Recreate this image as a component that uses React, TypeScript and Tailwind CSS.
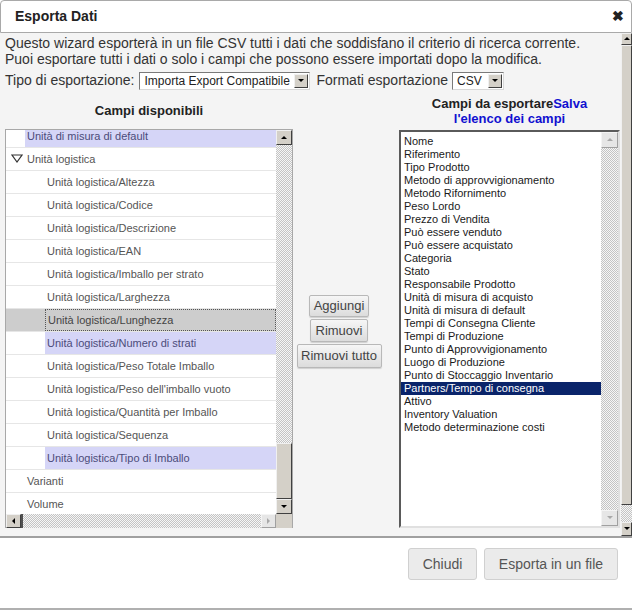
import React from "react";

type Row = { label: string; indent: number; kind?: "hl" | "sel"; toggle?: boolean };

const leftRows: Row[] = [
  { label: "Unità di misura di default", indent: 19, kind: "hl" },
  { label: "Unità logistica", indent: 19, toggle: true },
  { label: "Unità logistica/Altezza", indent: 39 },
  { label: "Unità logistica/Codice", indent: 39 },
  { label: "Unità logistica/Descrizione", indent: 39 },
  { label: "Unità logistica/EAN", indent: 39 },
  { label: "Unità logistica/Imballo per strato", indent: 39 },
  { label: "Unità logistica/Larghezza", indent: 39 },
  { label: "Unità logistica/Lunghezza", indent: 39, kind: "sel" },
  { label: "Unità logistica/Numero di strati", indent: 39, kind: "hl" },
  { label: "Unità logistica/Peso Totale Imballo", indent: 39 },
  { label: "Unità logistica/Peso dell'imballo vuoto", indent: 39 },
  { label: "Unità logistica/Quantità per Imballo", indent: 39 },
  { label: "Unità logistica/Sequenza", indent: 39 },
  { label: "Unità logistica/Tipo di Imballo", indent: 39, kind: "hl" },
  { label: "Varianti", indent: 19 },
  { label: "Volume", indent: 19 },
];

const rightItems = [
  "Nome",
  "Riferimento",
  "Tipo Prodotto",
  "Metodo di approvvigionamento",
  "Metodo Rifornimento",
  "Peso Lordo",
  "Prezzo di Vendita",
  "Può essere venduto",
  "Può essere acquistato",
  "Categoria",
  "Stato",
  "Responsabile Prodotto",
  "Unità di misura di acquisto",
  "Unità di misura di default",
  "Tempi di Consegna Cliente",
  "Tempi di Produzione",
  "Punto di Approvvigionamento",
  "Luogo di Produzione",
  "Punto di Stoccaggio Inventario",
  "Partners/Tempo di consegna",
  "Attivo",
  "Inventory Valuation",
  "Metodo determinazione costi",
];

const checker =
  "bg-[repeating-conic-gradient(#c4c4c4_0_25%,#f6f6f6_0_50%)] bg-[length:2px_2px]";

function Arrow({ dir, color = "#000" }: { dir: "up" | "down" | "left" | "right"; color?: string }) {
  const pts = {
    up: "1,5 4,2 7,5",
    down: "1,2 4,5 7,2",
    left: "5,1 2,4 5,7",
    right: "2,1 5,4 2,7",
  }[dir];
  return (
    <svg width="8" height="8" viewBox="0 0 8 8">
      <polygon points={pts} fill={color} />
    </svg>
  );
}

function ArrowBtn({ dir, w, h, faded }: { dir: "up" | "down" | "left" | "right"; w: string; h: string; faded?: boolean }) {
  return (
    <div
      className={`${w} ${h} flex shrink-0 items-center justify-center border ${
        faded
          ? "border-t-[#f4f4f4] border-l-[#f4f4f4] border-b-[#a0a0a0] border-r-[#a0a0a0] bg-[#e6e6e6]"
          : "border-t-[#f0f0f0] border-l-[#f0f0f0] border-b-[#404040] border-r-[#404040] bg-[#d4d0c8]"
      }`}
    >
      <Arrow dir={dir} color={faded ? "#a8a8a8" : "#000"} />
    </div>
  );
}

function Select({ value, w }: { value: string; w: string }) {
  return (
    <div className={`${w} h-[18px] flex items-stretch border border-t-[#7a7a7a] border-l-[#7a7a7a] border-b-[#d8d8d8] border-r-[#d8d8d8] bg-white`}>
      <span className="flex-1 overflow-hidden whitespace-nowrap pl-[4px] text-[12px] leading-[16px] text-[#222]">
        {value}
      </span>
      <div className="my-[1px] mr-[1px] w-[14px] flex items-center justify-center border border-t-[#f0f0f0] border-l-[#f0f0f0] border-b-[#404040] border-r-[#404040] bg-[#d4d0c8]">
        <Arrow dir="down" />
      </div>
    </div>
  );
}

function MidButton({ label, w, h }: { label: string; w: string; h: string }) {
  return (
    <button className={`${w} ${h} rounded-[2px] border border-[#b8b8b8] bg-gradient-to-b from-[#f6f6f6] to-[#dcdcdc] text-[13px] text-[#444] shadow-[0_1px_1px_rgba(0,0,0,0.15)]`}>
      {label}
    </button>
  );
}

function LeftList() {
  return (
    <div className="relative flex h-[399px] w-[288px] flex-col border border-[#a8a8a8] bg-white">
      <div className="flex h-[384px]">
        <div className="w-[271px] overflow-hidden">
          <div className="-mt-[5px]">
            {leftRows.map((r) => (
              <div
                key={r.label}
                className={`flex h-[23px] items-stretch border-b border-[#e6e6e6] ${
                  r.kind === "sel" ? "bg-[#cdcdcd]" : "bg-white"
                }`}
              >
                <div className="flex shrink-0 items-center justify-center" style={{ width: r.indent }}>
                  {r.toggle && (
                    <svg width="12" height="10" viewBox="0 0 12 10" className="ml-[3px]">
                      <polygon points="1,1 11,1 6,8" fill="none" stroke="#333" strokeWidth="1.2" />
                    </svg>
                  )}
                </div>
                <div
                  className={`flex flex-1 items-center pl-[2px] text-[11px] whitespace-nowrap ${
                    r.kind === "hl"
                      ? "bg-[#d5d5f7] text-[#4c4c7a]"
                      : r.kind === "sel"
                      ? "border border-dotted border-[#555] text-[#444]"
                      : "text-[#555]"
                  }`}
                >
                  {r.label}
                </div>
              </div>
            ))}
          </div>
        </div>
        <div className={`flex w-[16px] flex-col ${checker}`}>
          <ArrowBtn dir="up" w="w-[16px]" h="h-[15px]" />
          <div className="flex-1" />
          <div className="h-[56px] border border-t-[#f0f0f0] border-l-[#f0f0f0] border-b-[#404040] border-r-[#404040] bg-[#d4d0c8]" />
          <ArrowBtn dir="down" w="w-[16px]" h="h-[15px]" />
        </div>
      </div>
      <div className="flex h-[14px]">
        <div className={`flex flex-1 ${checker}`}>
          <ArrowBtn dir="left" w="w-[15px]" h="h-[14px]" />
          <div className="w-[2px] bg-[#505050]" />
          <div className="flex-1" />
          <ArrowBtn dir="right" w="w-[15px]" h="h-[14px]" faded />
        </div>
        <div className="w-[16px] bg-[#d4d0c8]" />
      </div>
    </div>
  );
}

function RightList() {
  return (
    <div className="mt-[1px] flex h-[398px] w-[221px] border-2 border-t-[#5a5a5a] border-l-[#5a5a5a] border-b-[#e0e0e0] border-r-[#e0e0e0] bg-white">
      <div className="flex-1 pt-[3px] text-[11px] leading-[13px] text-[#1a1a1a]">
        {rightItems.map((it) => (
          <div
            key={it}
            className={`pl-[3px] whitespace-nowrap ${
              it === "Partners/Tempo di consegna" ? "bg-[#0a246a] text-white" : ""
            }`}
          >
            {it}
          </div>
        ))}
      </div>
      <div className={`flex w-[17px] flex-col ${checker}`}>
        <ArrowBtn dir="up" w="w-[17px]" h="h-[16px]" faded />
        <div className="flex-1" />
        <ArrowBtn dir="down" w="w-[17px]" h="h-[16px]" faded />
      </div>
    </div>
  );
}

export default function App() {
  return (
    <div className="h-[610px] w-[632px] overflow-hidden bg-white font-['Liberation_Sans',Arial,sans-serif]">
      <div className="flex h-[33px] items-center justify-between rounded-t-[4px] border border-[#a9a9a9] bg-white pl-[14px] pr-[7px]">
        <span className="text-[14px] font-bold text-[#222]">Esporta Dati</span>
        <span className="text-[14px] font-bold text-[#222]">✖</span>
      </div>
      <div className="flex h-[503px] bg-[#f4f4f4]">
        <div className="w-[621px] pl-[5px] pt-[2px]">
          <p className="text-[14px] leading-[16px] text-[#333]">
            Questo wizard esporterà in un file CSV tutti i dati che soddisfano il criterio di ricerca corrente.
          </p>
          <p className="text-[14px] leading-[16px] text-[#333]">
            Puoi esportare tutti i dati o solo i campi che possono essere importati dopo la modifica.
          </p>
          <div className="mt-[3px] flex items-center text-[14px] text-[#333]">
            <span className="mr-[5px]">Tipo di esportazione:</span>
            <Select value="Importa Export Compatibile" w="w-[171px]" />
            <span className="ml-[6px] mr-[4px]">Formati esportazione</span>
            <Select value="CSV" w="w-[52px]" />
          </div>
          <div className="mt-[4px] flex h-[32px] items-center">
            <div className="w-[288px] text-center text-[13px] font-bold text-[#222]">Campi disponibili</div>
            <div className="w-[106px]" />
            <div className="w-[221px] text-center text-[13px] font-bold leading-[15px] text-[#222]">
              Campi da esportare<span className="text-[#1010d0]">Salva</span>
              <br />
              <span className="text-[#1010d0]">l'elenco dei campi</span>
            </div>
          </div>
          <div className="mt-[2px] flex items-start">
            <LeftList />
            <div className="flex w-[106px] flex-col items-center gap-[2px] pr-[14px] pt-[166px]">
              <MidButton label="Aggiungi" w="w-[60px]" h="h-[22px]" />
              <MidButton label="Rimuovi" w="w-[58px]" h="h-[23px]" />
              <MidButton label="Rimuovi tutto" w="w-[85px]" h="h-[24px]" />
            </div>
            <RightList />
          </div>
        </div>
        <div className={`flex w-[11px] flex-col ${checker}`}>
          <ArrowBtn dir="up" w="w-[11px]" h="h-[12px]" />
          <div className="h-[460px] border border-t-[#f0f0f0] border-l-[#f0f0f0] border-b-[#404040] border-r-[#404040] bg-[#d4d0c8]" />
          <div className="flex-1" />
          <ArrowBtn dir="down" w="w-[11px]" h="h-[14px]" />
        </div>
      </div>
      <div className="flex h-[74px] items-start justify-end gap-[7px] border-t-2 border-[#a0a0a0] border-b-2 border-b-[#b0b0b0] pr-[14px] pt-[10px]">
        <button className="h-[32px] w-[69px] rounded-[3px] border border-[#d0d0d0] bg-[#ebebeb] text-[14px] text-[#555]">
          Chiudi
        </button>
        <button className="h-[32px] w-[134px] rounded-[3px] border border-[#d0d0d0] bg-[#ebebeb] text-[14px] text-[#555]">
          Esporta in un file
        </button>
      </div>
    </div>
  );
}
